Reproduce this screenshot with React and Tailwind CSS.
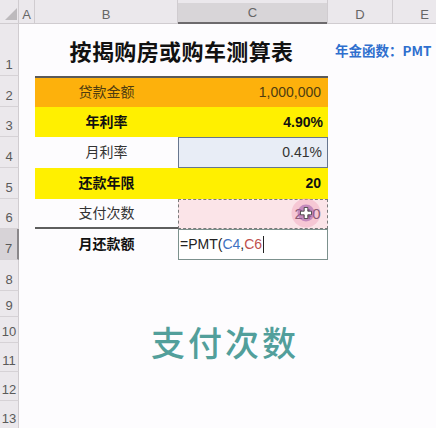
import React from "react";

const font = { fontFamily: '"Liberation Sans", "Noto Sans CJK SC", sans-serif' };

function RowLabel({ n, active }) {
  return (
    <div
      className={`flex items-end justify-center pb-[1px] text-[13px] text-[#5a5a5a] border-b border-[#d6d2d6] ${
        active ? "bg-[#d7d3d7] border-r-2 border-r-[#8a878a]" : "bg-[#ebe8ec] border-r border-r-[#d0ccd0]"
      }`}
    >
      {n}
    </div>
  );
}

function Empty({ cols = 1 }) {
  return <div className={cols === 2 ? "col-span-2" : ""} />;
}

export default function App() {
  return (
    <div
      className="relative w-[436px] h-[428px] overflow-hidden bg-[#fdfcfe] text-[#222]"
      style={font}
    >
      <div className="grid grid-cols-[19px_16px_143px_150px_65px_1fr] grid-rows-[24px_52px_31px_30px_31px_31px_30px_31px_31px_26px_26px_29px_29px_29px]">
        {/* header row */}
        <div className="relative bg-[#ebe8ec] border-b border-r border-[#d0ccd0]">
          <svg className="absolute left-[5px] top-[8px]" width="12" height="12" viewBox="0 0 12 12">
            <polygon points="0,12 12,0 12,12" fill="#bdbabd" />
          </svg>
        </div>
        <div className="flex items-center justify-center bg-[#ebe8ec] border-b border-r border-[#d0ccd0] text-[13px] text-[#666] pt-[6px]">A</div>
        <div className="flex items-center justify-center bg-[#ebe8ec] border-b border-r border-[#d0ccd0] text-[13px] text-[#666] pt-[6px]">B</div>
        <div className="flex flex-col bg-[#ebe8ec] border-r border-[#d0ccd0]">
          <div className="h-[7px]" />
          <div className="flex flex-1 items-center justify-center bg-[#d8d5d8] border-b-2 border-[#6d6a6d] text-[13px] text-[#666]">C</div>
        </div>
        <div className="flex items-center justify-center bg-[#ebe8ec] border-b border-r border-[#d0ccd0] text-[13px] text-[#666] pt-[6px]">D</div>
        <div className="flex items-center justify-center bg-[#ebe8ec] border-b border-[#d0ccd0] text-[13px] text-[#666] pt-[6px] pl-[20px]">E</div>

        {/* row 1 */}
        <RowLabel n={1} />
        <Empty />
        <div className="col-span-2 flex items-center justify-center">
          <span className="text-[22px] font-bold tracking-[0.4px] text-[#111]" style={{ fontFamily: '"Noto Sans CJK SC", sans-serif' }}>
            按揭购房或购车测算表
          </span>
        </div>
        <div className="col-span-2 flex items-center pl-[7px] pt-[1px]">
          <span className="whitespace-nowrap text-[13.5px] font-bold text-[#2f6fce]" style={{ fontFamily: '"Noto Sans CJK SC", sans-serif' }}>
            年金函数：PMT
          </span>
        </div>

        {/* row 2 */}
        <RowLabel n={2} />
        <Empty />
        <div className="flex items-center justify-center bg-[#fdb10c] border-t-2 border-[#5a5a5a] text-[14px] text-[#4e3c10]">贷款金额</div>
        <div className="flex items-center justify-end pr-[7px] bg-[#fdb10c] border-t-2 border-[#5a5a5a] text-[14px] text-[#4e3c10]">1,000,000</div>
        <Empty cols={2} />

        {/* row 3 */}
        <RowLabel n={3} />
        <Empty />
        <div className="flex items-center justify-center bg-[#fff000] text-[14px] font-bold text-[#111]">年利率</div>
        <div className="flex items-center justify-end pr-[5px] bg-[#fff000] text-[14px] font-bold text-[#111]">4.90%</div>
        <Empty cols={2} />

        {/* row 4 */}
        <RowLabel n={4} />
        <Empty />
        <div className="flex items-center justify-center text-[14px] text-[#333]">月利率</div>
        <div className="flex items-center justify-end pr-[5px] bg-[#e8edf6] border border-[#67768f] text-[14px] text-[#333]">0.41%</div>
        <Empty cols={2} />

        {/* row 5 */}
        <RowLabel n={5} />
        <Empty />
        <div className="flex items-center justify-center bg-[#fff000] text-[14px] font-bold text-[#111]">还款年限</div>
        <div className="flex items-center justify-end pr-[7px] bg-[#fff000] text-[14px] font-bold text-[#111]">20</div>
        <Empty cols={2} />

        {/* row 6 */}
        <RowLabel n={6} />
        <Empty />
        <div className="flex items-center justify-center border-b-2 border-[#5e5e5e] text-[14px] text-[#333]">支付次数</div>
        <div className="flex items-center justify-end pr-[6px] bg-[#fbe4e8] border border-dashed border-[#7a7a7a] text-[15px] tracking-[0.5px] text-[#4a2f4a]">240</div>
        <Empty cols={2} />

        {/* row 7 */}
        <RowLabel n={7} active />
        <Empty />
        <div className="flex items-center justify-center text-[14px] font-bold text-[#111]">月还款额</div>
        <div className="flex items-center pl-[1px] bg-white border border-[#7c918d] text-[14px] text-[#222]">
          <span>=PMT(</span>
          <span className="text-[#3e72c2]">C4</span>
          <span>,</span>
          <span className="text-[#c0504d]">C6</span>
          <span className="ml-[1px] inline-block h-[17px] w-[1px] bg-[#222]" />
        </div>
        <Empty cols={2} />

        {/* rows 8-13 */}
        {[8, 9, 10, 11, 12, 13].map((n) => (
          <React.Fragment key={n}>
            <RowLabel n={n} />
            <div className="col-span-5" />
          </React.Fragment>
        ))}
      </div>

      {/* caption overlay */}
      <div
        className="absolute left-[151px] top-[322px] text-[34px] leading-[40px] tracking-[3px] text-[#529f9b]"
        style={{ fontFamily: '"Noto Sans CJK SC", serif', fontWeight: 500 }}
      >
        支付次数
      </div>

      {/* cursor overlay */}
      <svg className="absolute left-[290px] top-[197px]" width="32" height="32" viewBox="0 0 32 32">
        <circle cx="16" cy="16" r="14.5" fill="#f19ab7" opacity="0.4" />
        <circle cx="16" cy="16" r="8.5" fill="#9a58a8" opacity="0.55" />
        <path
          d="M14.2 10.5 H17.8 V14.2 H21.5 V17.8 H17.8 V21.5 H14.2 V17.8 H10.5 V14.2 H14.2 Z"
          fill="#ffffff"
          stroke="#333"
          strokeWidth="0.8"
        />
      </svg>
    </div>
  );
}
